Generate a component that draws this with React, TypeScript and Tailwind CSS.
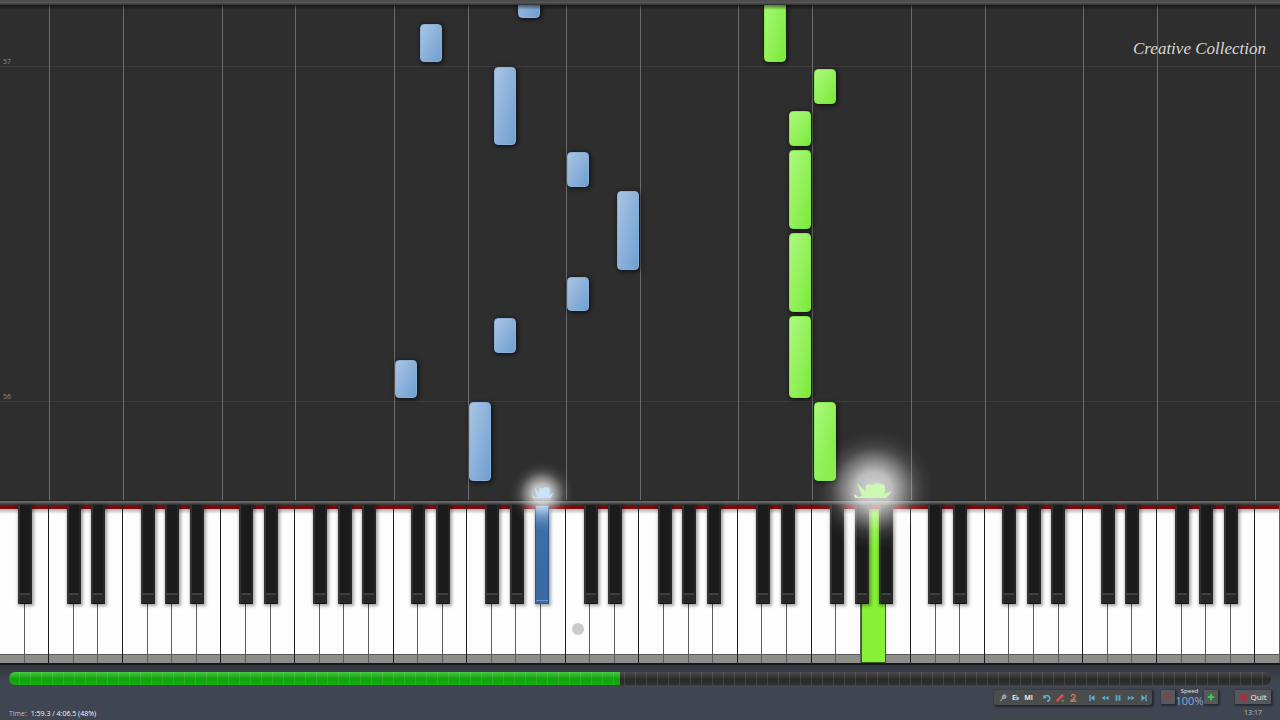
import React from "react";

type Hand = "left" | "right";
type Note = { key: number; bottom: number; length: number; hand: Hand };

const WHITE_KEYS = 52;
const keys = Array.from({ length: WHITE_KEYS }, (_, i) => i);
const octaveLines = keys.filter((k) => k % 7 === 2 || k % 7 === 5);
const blackKeys = keys.filter((k) => k > 0 && k % 7 !== 2 && k % 7 !== 5);
const PRESSED_WHITE = 35;
const PRESSED_BLACK = 22;

const notes: Note[] = [
  { key: 21, bottom: 482, length: 38, hand: "left" },
  { key: 17, bottom: 438, length: 38, hand: "left" },
  { key: 20, bottom: 355, length: 78, hand: "left" },
  { key: 23, bottom: 313, length: 35, hand: "left" },
  { key: 25, bottom: 230, length: 79, hand: "left" },
  { key: 23, bottom: 189, length: 34, hand: "left" },
  { key: 20, bottom: 147, length: 35, hand: "left" },
  { key: 16, bottom: 102, length: 38, hand: "left" },
  { key: 19, bottom: 19, length: 79, hand: "left" },
  { key: 31, bottom: 438, length: 79, hand: "right" },
  { key: 33, bottom: 396, length: 35, hand: "right" },
  { key: 32, bottom: 354, length: 35, hand: "right" },
  { key: 32, bottom: 271, length: 79, hand: "right" },
  { key: 32, bottom: 188, length: 79, hand: "right" },
  { key: 32, bottom: 102, length: 82, hand: "right" },
  { key: 33, bottom: 19, length: 79, hand: "right" },
];

const measures = [
  { label: "57", bottom: 433 },
  { label: "56", bottom: 98 },
];

const pct = (k: number) => `${(k / WHITE_KEYS) * 100}%`;

function PianoRoll() {
  return (
    <section aria-label="Falling notes" className="relative min-h-[300px] flex-1 overflow-hidden bg-[#2e2e2e]">
      {measures.map((m) => (
        <div key={m.label} className="absolute inset-x-0 border-b border-[#3c3c3c]" style={{ bottom: m.bottom }}>
          <span className="block pl-[3px] text-[7px] leading-[8px] text-[#8a8a8a]">{m.label}</span>
        </div>
      ))}
      {octaveLines.map((k) => (
        <div key={k} className="absolute inset-y-0 w-px bg-[#6c6c6c]" style={{ left: pct(k) }} />
      ))}
      {notes.map((n) => (
        <div
          key={`${n.key}-${n.bottom}`}
          className={
            n.hand === "left"
              ? "absolute -ml-[11px] w-[22px] rounded-[4px] border border-[#86afd9] bg-linear-to-br from-[#a9c5e4] to-[#6f9fd1] shadow-[1px_1px_4px_1px_rgba(0,0,0,0.55)]"
              : "absolute -ml-[11px] w-[22px] rounded-[4px] border border-[#84e64a] bg-linear-to-br from-[#adf87c] to-[#7aea32] shadow-[1px_1px_4px_1px_rgba(0,0,0,0.55)]"
          }
          style={{ left: pct(n.key + 0.5), bottom: n.bottom, height: n.length }}
        />
      ))}
      <h1 className="absolute top-[34px] right-[14px] font-['Apple_Chancery','Liberation_Serif',serif] text-[17px] leading-[20px] text-[#d8d8d8] italic">
        Creative Collection
      </h1>
      <div className="absolute inset-x-0 top-0 h-[5px] bg-linear-to-b from-black/50 to-transparent" />
    </section>
  );
}

function Keyboard() {
  return (
    <section aria-label="Piano keyboard" className="relative h-[158px] shrink-0 bg-white">
      <div className="flex h-full">
        {keys.map((k) => (
          <div
            key={k}
            className={
              k === PRESSED_WHITE
                ? "flex flex-1 flex-col border-x border-b border-[#3c5a28] bg-[#86f136]"
                : k % 7 === 1 || k % 7 === 4
                  ? "flex flex-1 flex-col border-r border-[#1c1c1c] bg-[#fdfdfd]"
                  : "flex flex-1 flex-col border-r border-[#5c5c5c] bg-[#fdfdfd]"
            }
          >
            <div className="h-[4px] bg-[#7c0a0e]" />
            <div className="h-[5px] bg-linear-to-b from-black/30 to-transparent" />
            {k !== PRESSED_WHITE && <div className="mt-auto h-[9px] border-t border-[#5a5a58] bg-[#8d8d8a]" />}
          </div>
        ))}
      </div>
      {blackKeys.map((k) => (
        <div
          key={k}
          className={
            k === PRESSED_BLACK
              ? "absolute top-0 -ml-[7px] h-[99px] w-[14px] border border-[#2b5788] bg-linear-to-b from-[#6f9ccb] via-[#3d6ea8] via-25% to-[#3a69a3] shadow-[1px_1px_3px_1px_rgba(0,0,0,0.35)]"
              : "absolute top-0 -ml-[7px] flex h-[99px] w-[14px] flex-col border-x-2 border-r-[#262626] border-l-[#333] bg-[#1b1b1b] shadow-[1px_1px_3px_1px_rgba(0,0,0,0.35)]"
          }
          style={{ left: pct(k) }}
        >
          {k === PRESSED_BLACK ? (
            <div className="mt-[94px] h-px bg-[#6a96c8]" />
          ) : (
            <div className="mt-auto h-[11px] border-t-2 border-b border-t-[#3f3f3f] border-b-[#111] bg-[#272727]" />
          )}
        </div>
      ))}
      <div className="absolute top-[118px] -ml-[6px] h-[12px] w-[12px] rounded-full bg-[#cbcbcb]" style={{ left: pct(23.5) }} />
    </section>
  );
}

function Glow({ at, large }: { at: number; large?: boolean }) {
  return (
    <div className="pointer-events-none absolute top-0 z-10" style={{ left: pct(at) }}>
      <svg
        viewBox="0 0 120 120"
        aria-hidden="true"
        className={large ? "absolute -top-[70px] -left-[60px] h-[120px] w-[120px]" : "absolute -top-[38px] -left-[32px] h-[64px] w-[64px]"}
      >
        <defs>
          <radialGradient id={large ? "glow-right" : "glow-left"}>
            <stop offset="0" stopColor="#fff" stopOpacity="0.8" />
            <stop offset="0.3" stopColor="#fff" stopOpacity="0.68" />
            <stop offset="0.5" stopColor="#fff" stopOpacity="0.4" />
            <stop offset="0.7" stopColor="#fff" stopOpacity="0.13" />
            <stop offset="0.85" stopColor="#fff" stopOpacity="0.04" />
            <stop offset="1" stopColor="#fff" stopOpacity="0" />
          </radialGradient>
        </defs>
        <circle cx="60" cy="60" r="60" fill={large ? "url(#glow-right)" : "url(#glow-left)"} />
      </svg>
      <svg
        viewBox="0 0 44 16"
        aria-hidden="true"
        className={large ? "absolute -top-[17px] -left-[25px] h-[16px] w-[44px]" : "absolute -top-[13px] -left-[12px] h-[12px] w-[24px]"}
        preserveAspectRatio="none"
      >
        <path
          d="M0 11l7 1 2 2 4-1L8 0l5 5 4 3V3l2-2 5 1 4-2 5 1 3 2v6l-1 2 8-3-4 5-2 2H6l-1-3z"
          fill={large ? "#cdf8b4" : "#c9e4f8"}
        />
      </svg>
    </div>
  );
}

function Tool({ label, children }: { label: string; children: React.ReactNode }) {
  return (
    <button
      type="button"
      aria-label={label}
      className="flex h-[14px] w-[13px] items-center justify-center text-[7px] leading-none font-bold text-[#e4e6ea]"
    >
      {children}
    </button>
  );
}

function Icon({ children }: { children: React.ReactNode }) {
  return (
    <svg viewBox="0 0 10 10" className="h-[10px] w-[10px]" fill="none" aria-hidden="true">
      {children}
    </svg>
  );
}

function Toolbar() {
  return (
    <div className="flex h-[15px] items-center rounded-[2px] bg-[#4b4d4d] px-[2px] shadow-[1px_1px_2px_1px_rgba(0,0,0,0.45)]">
      <Tool label="Settings">
        <Icon>
          <circle cx="6.2" cy="3.7" r="2" fill="#8b90a8" stroke="#b9bdcc" strokeWidth=".6" />
          <path d="M4.8 5.2L2.5 8" stroke="#aaa9b5" strokeWidth="1.1" />
        </Icon>
      </Tool>
      <Tool label="Note names">E♭</Tool>
      <Tool label="Note syllables">Mi</Tool>
      <span className="w-[5px]" />
      <Tool label="Undo">
        <Icon>
          <path d="M2.4 3.9A2.9 2.9 0 1 1 5 8.3" stroke="#55b4d6" strokeWidth="1.6" />
          <path d="M1 1.8l.4 4 3.6-1.4z" fill="#55b4d6" />
        </Icon>
      </Tool>
      <Tool label="Edit">
        <Icon>
          <path d="M1.8 8.2l5.7-5.9" stroke="#e04a4e" strokeWidth="2.4" />
          <path d="M6.5 1.3l2 2" stroke="#e9837f" strokeWidth="1" />
          <circle cx="8" cy="7.8" r="1.1" fill="#48a350" />
        </Icon>
      </Tool>
      <Tool label="Hands">
        <Icon>
          <path d="M3.6 3.6A1.8 1.8 0 1 1 5.6 5v1.4" stroke="#c9785b" strokeWidth="1.3" />
          <path d="M2 8.2h6.4M3 6.6h4.4" stroke="#c9785b" strokeWidth="1.4" />
        </Icon>
      </Tool>
      <span className="w-[6px]" />
      <Tool label="To start">
        <Icon>
          <path d="M3 2v6" stroke="#57aed4" strokeWidth="1.4" />
          <path d="M7.6 2v6L3.6 5z" fill="#57aed4" />
        </Icon>
      </Tool>
      <Tool label="Rewind">
        <Icon>
          <path d="M5 2.8v4.4L1.8 5zM8.5 2.8v4.4L5.3 5z" fill="#57aed4" />
        </Icon>
      </Tool>
      <Tool label="Pause">
        <Icon>
          <path d="M3.5 2.2v5.6M6.5 2.2v5.6" stroke="#57aed4" strokeWidth="1.8" />
        </Icon>
      </Tool>
      <Tool label="Fast forward">
        <Icon>
          <path d="M1.8 2.8v4.4L5 5zM5.3 2.8v4.4L8.5 5z" fill="#57aed4" />
        </Icon>
      </Tool>
      <Tool label="To end">
        <Icon>
          <path d="M7 2v6" stroke="#57aed4" strokeWidth="1.4" />
          <path d="M2.4 2v6l4-3z" fill="#57aed4" />
        </Icon>
      </Tool>
    </div>
  );
}

const smallButton =
  "flex h-[14px] w-[14px] items-center justify-center rounded-[1px] bg-[#575859] shadow-[1px_1px_2px_1px_rgba(0,0,0,0.4)]";

function Footer() {
  return (
    <footer className="flex h-[57px] shrink-0 flex-col border-t-2 border-[#16181d] bg-[#404552] bg-linear-to-b from-[#30343d] from-0% to-[#404552] to-30% px-[9px]">
      <div className="relative mt-[7px] h-[13px] shrink-0 overflow-hidden rounded-[6px] bg-linear-to-b from-[#4c4c4c] via-[#2b2b2b] via-55% to-[#303030]">
        <div className="h-full w-[48.4%] bg-linear-to-b from-[#43c63f] via-[#12a30c] via-50% to-[#15ab10]" />
        <div className="absolute inset-0 bg-[repeating-linear-gradient(90deg,transparent_0px,transparent_10px,rgba(255,255,255,0.1)_10px,rgba(255,255,255,0.1)_11px)]" />
        <input
          type="range"
          aria-label="Song position"
          min={0}
          max={246}
          defaultValue={119}
          className="absolute inset-0 h-full w-full cursor-pointer opacity-0"
        />
      </div>
      <div className="flex flex-1 items-end justify-between">
        <p className="pb-[2px] text-[7px] leading-[8px] text-[#b9bdc6]">
          Time: <span className="ml-[2px] font-medium text-[#f4f5f8]">1:59.3 / 4:06.5 (48%)</span>
        </p>
        <div className="flex items-start gap-[9px] self-start pt-[5px]">
          <Toolbar />
          <div className="flex items-start">
            <button type="button" aria-label="Slower" className={smallButton}>
              <svg viewBox="0 0 10 10" className="h-[8px] w-[8px]" aria-hidden="true">
                <path d="M0 5h10" stroke="#a83240" strokeWidth="2.4" />
              </svg>
            </button>
            <div className="-mt-[2px] flex w-[29px] flex-col items-center">
              <span className="text-[6px] leading-[7px] text-[#e6e8ec]">Speed</span>
              <span className="font-['Open_Sans',sans-serif] text-[11px] leading-[11px] text-[#7fa9d6]">100%</span>
            </div>
            <button type="button" aria-label="Faster" className={smallButton}>
              <svg viewBox="0 0 10 10" className="h-[8px] w-[8px]" aria-hidden="true">
                <path d="M1 5h8M5 1v8" stroke="#3fc84a" strokeWidth="2.8" />
              </svg>
            </button>
          </div>
          <div className="ml-[8px] flex flex-col items-center">
            <button
              type="button"
              className="flex h-[14px] w-[36px] items-center justify-center gap-[4px] rounded-[1px] bg-[#575859] text-[8px] leading-none font-medium text-[#f4f4f4] shadow-[1px_1px_2px_1px_rgba(0,0,0,0.4)]"
            >
              <span className="h-[7px] w-[7px] shrink-0 rounded-full bg-[#a92f40]" />
              Quit
            </button>
            <time className="mt-[5px] text-[7px] leading-[8px] text-[#b9bdc6]">13:17</time>
          </div>
        </div>
      </div>
    </footer>
  );
}

export default function App() {
  return (
    <main className="flex min-h-screen flex-col overflow-hidden bg-[#2e2e2e] font-['Open_Sans','Noto_Sans',sans-serif]">
      <div className="h-[5px] shrink-0 bg-linear-to-b from-[#4a4a4a] via-[#555] to-[#333]" />
      <PianoRoll />
      <div className="relative shrink-0">
        <div className="h-[5px] border-t border-[#222] bg-linear-to-b from-[#777] to-[#333]" />
        <Keyboard />
        <Glow at={22} />
        <Glow at={35.5} large />
      </div>
      <Footer />
    </main>
  );
}
